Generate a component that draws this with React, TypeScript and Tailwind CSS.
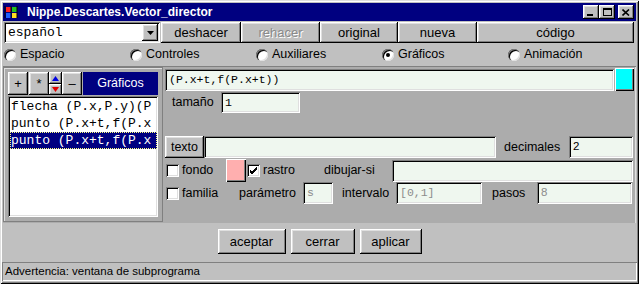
import React from 'react'

const RAISED = 'bg-[#c0c0c0] shadow-[inset_-1px_-1px_0_#000,inset_1px_1px_0_#fff,inset_-2px_-2px_0_#808080,inset_2px_2px_0_#dfdfdf]'
const SUNKEN = 'shadow-[inset_1px_1px_0_#808080,inset_-1px_-1px_0_#fff,inset_2px_2px_0_#000,inset_-2px_-2px_0_#dfdfdf]'
const FIELD = `bg-[#eff7ef] ${SUNKEN} flex items-center px-[4px]`
const MONO = "font-['Liberation_Mono','Courier_New',monospace]"

const Radio = ({ on }: { on?: boolean }) => (
  <span className="relative w-[12px] h-[12px] rounded-full bg-white shadow-[inset_1px_1px_0_#808080,inset_2px_2px_0_#000,inset_-1px_-1px_0_#dfdfdf] flex items-center justify-center shrink-0">
    {on && <span className="w-[4px] h-[4px] rounded-full bg-black" />}
  </span>
)

const Check = ({ on }: { on?: boolean }) => (
  <span className={`w-[13px] h-[13px] bg-white ${SUNKEN} flex items-center justify-center shrink-0`}>
    {on && (
      <svg width="9" height="9" viewBox="0 0 9 9">
        <path d="M1 4 L3 6 L8 1 M1 5 L3 7 L8 2 M1 6 L3 8 L8 3" stroke="#000" strokeWidth="1" fill="none" />
      </svg>
    )}
  </span>
)

const TitleBtn = ({ children }: { children: React.ReactNode }) => (
  <div className={`w-[16px] h-[14px] ${RAISED} flex items-center justify-center`}>{children}</div>
)

export default function App() {
  const radios = ['Espacio', 'Controles', 'Auxiliares', 'Gráficos', 'Animación']
  const items = ['flecha (P.x,P.y)(P', 'punto (P.x+t,f(P.x', 'punto (P.x+t,f(P.x']

  return (
    <div className="w-[639px] h-[284px] bg-[#c0c0c0] p-[3px] flex flex-col text-[12px] text-black font-['Liberation_Sans',Arial,sans-serif] shadow-[inset_1px_1px_0_#dfdfdf,inset_-1px_-1px_0_#000,inset_2px_2px_0_#fff,inset_-2px_-2px_0_#808080] overflow-hidden">
      {/* title bar */}
      <div className="h-[18px] bg-[#000080] flex items-center pl-[1px] pr-[2px] shrink-0">
        <svg width="16" height="14" viewBox="0 0 16 14" className="shrink-0">
          <rect x="0" y="0" width="16" height="14" fill="#000080" />
          <path d="M2 2 h5 v5 h-5z" fill="#ff2020" />
          <path d="M8 2 h5 v5 h-5z" fill="#20c020" />
          <path d="M2 8 h5 v5 h-5z" fill="#2060ff" />
          <path d="M8 8 h5 v5 h-5z" fill="#ffe020" />
          <path d="M1 1 v12 M7 1 v12 M13 1 v12" stroke="#000" strokeWidth="1" />
        </svg>
        <span className="ml-[7px] text-white font-bold text-[12px] leading-none">Nippe.Descartes.Vector_director</span>
        <div className="ml-auto flex items-center">
          <TitleBtn><span className="w-[6px] h-[2px] bg-black mt-[6px] mr-[2px]" /></TitleBtn>
          <TitleBtn><span className="w-[9px] h-[8px] border border-black border-t-2" /></TitleBtn>
          <div className="ml-[3px]">
            <TitleBtn>
              <svg width="8" height="7" viewBox="0 0 8 7"><path d="M0.5 0.5 L7 6.5 M7 0.5 L0.5 6.5" stroke="#000" strokeWidth="1.6" /></svg>
            </TitleBtn>
          </div>
        </div>
      </div>

      {/* toolbar */}
      <div className="mt-[1px] h-[21px] flex pl-[1px] shrink-0 text-[13px]">
        <div className={`w-[156px] mr-[1px] bg-white ${SUNKEN} flex items-center`}>
          <span className={`${MONO} text-[13px] pl-[4px] flex-1`}>español</span>
          <div className={`w-[16px] h-[17px] mr-[2px] ${RAISED} flex items-center justify-center`}>
            <svg width="7" height="4" viewBox="0 0 7 4"><path d="M0 0 h7 l-3.5 4z" fill="#000" /></svg>
          </div>
        </div>
        <div className={`w-[80px] ${RAISED} flex items-center justify-center`}>deshacer</div>
        <div className={`w-[79px] ${RAISED} flex items-center justify-center text-[#8a8a8a] [text-shadow:1px_1px_0_#fff]`}>rehacer</div>
        <div className={`w-[78px] ${RAISED} flex items-center justify-center`}>original</div>
        <div className={`w-[79px] ${RAISED} flex items-center justify-center`}>nueva</div>
        <div className={`w-[157px] ${RAISED} flex items-center justify-center`}>código</div>
      </div>

      {/* radios */}
      <div className="h-[23px] pl-[1px] grid grid-cols-[126px_126px_126px_126px_126px] items-center shrink-0 text-[12.5px]">
        {radios.map(r => (
          <div key={r} className="flex items-center gap-[4px]">
            <Radio on={r === 'Gráficos'} />
            <span>{r}</span>
          </div>
        ))}
      </div>

      {/* main panel */}
      <div className="h-[157px] bg-[#acacac] flex shrink-0 shadow-[inset_0_1px_0_#808080,inset_-1px_0_0_#dfdfdf]">
        <div className="mt-[1px] w-[160px] h-[155px] p-[5px] flex flex-col shadow-[inset_1px_1px_0_#808080,inset_-1px_-1px_0_#808080,inset_2px_2px_0_#dfdfdf]">
          <div className="h-[23px] flex text-[13px] shrink-0">
            <div className={`w-[20px] ${RAISED} flex items-center justify-center`}>+</div>
            <div className={`w-[20px] ml-[1px] ${RAISED} flex items-center justify-center`}>*</div>
            <div className="w-[13px] flex flex-col">
              <div className={`h-[12px] ${RAISED} flex items-center justify-center`}>
                <svg width="7" height="5" viewBox="0 0 7 5"><path d="M0 5 h7 l-3.5 -5z" fill="#0000e0" /></svg>
              </div>
              <div className={`h-[11px] ${RAISED} flex items-center justify-center`}>
                <svg width="7" height="5" viewBox="0 0 7 5"><path d="M0 0 h7 l-3.5 5z" fill="#e00000" /></svg>
              </div>
            </div>
            <div className={`w-[20px] ${RAISED} flex items-center justify-center`}>–</div>
            <div className="flex-1 ml-[1px] bg-[#000080] text-white flex items-center justify-center text-[12.5px]">Gráficos</div>
          </div>
          <div className={`mt-[1px] flex-1 bg-white ${SUNKEN} pt-[2px] pl-[2px] pr-[1px] ${MONO} text-[13px]`}>
            {items.map((t, i) => (
              <div
                key={i}
                className={`h-[17px] leading-[17px] pl-[1px] whitespace-nowrap overflow-hidden ${i === 2 ? 'bg-[#000080] text-white outline-1 outline-dotted outline-[#ffff80] -outline-offset-1' : ''}`}
              >
                {t}
              </div>
            ))}
          </div>
        </div>

        <div className="flex-1 pl-[2px] pt-[2px] flex flex-col">
          <div className="h-[23px] flex">
            <div className={`flex-1 h-[22px] mt-[1px] ${FIELD} ${MONO} text-[11.5px]`}>(P.x+t,f(P.x+t))</div>
            <div className="w-[19px] ml-[1px] mr-[2px] bg-[#00ffff] shadow-[inset_1px_1px_0_#fff,inset_-1px_-1px_0_#000,inset_-2px_-2px_0_#808080]" />
          </div>
          <div className="h-[22px] flex items-center pt-[1px]">
            <span className="ml-[7px] w-[49px] text-[12.5px]">tamaño</span>
            <div className={`w-[79px] h-[21px] ${FIELD} ${MONO} text-[11.5px]`}>1</div>
          </div>

          <div className="mt-[23px] h-[22px] flex items-center">
            <div className={`w-[39px] h-[22px] ${RAISED} flex items-center justify-center text-[12.5px]`}>texto</div>
            <div className={`w-[292px] h-[22px] ${FIELD}`} />
            <span className="ml-[8px] w-[65px] text-[12.5px]">decimales</span>
            <div className={`w-[64px] h-[22px] ${FIELD} text-[11.5px]`}>2</div>
          </div>

          <div className="mt-[1px] h-[23px] flex items-center text-[12.5px]">
            <span className="ml-[1px]"><Check /></span>
            <span className="ml-[3px] w-[44px]">fondo</span>
            <div className="w-[20px] h-[23px] bg-[#ffafaf] shadow-[inset_1px_1px_0_#fff,inset_-1px_-1px_0_#000,inset_-2px_-2px_0_#808080]" />
            <span className="ml-[1px]"><Check on /></span>
            <span className="ml-[3px] w-[61px]">rastro</span>
            <span className="w-[68px]">dibujar-si</span>
            <div className={`w-[241px] h-[22px] ${FIELD}`} />
          </div>

          <div className="h-[22px] flex items-center text-[12.5px]">
            <span className="ml-[1px]"><Check /></span>
            <span className="ml-[3px] w-[57px]">familia</span>
            <span className="w-[64px]">parámetro</span>
            <div className={`w-[30px] h-[22px] ${FIELD} ${MONO} text-[11.5px] text-[#8c8c8c]`}>s</div>
            <span className="ml-[9px] w-[54px]">intervalo</span>
            <div className={`w-[86px] h-[22px] ${FIELD} ${MONO} text-[11.5px] text-[#8c8c8c]`}>[0,1]</div>
            <span className="ml-[10px] w-[45px]">pasos</span>
            <div className={`w-[95px] h-[22px] ${FIELD} text-[11.5px] text-[#8c8c8c]`}>8</div>
          </div>
        </div>
      </div>

      {/* bottom buttons */}
      <div className="h-[39px] flex justify-center gap-[5px] pt-[6px] shrink-0 text-[13px]">
        <div className={`w-[68px] h-[25px] ${RAISED} flex items-center justify-center`}>aceptar</div>
        <div className={`w-[64px] h-[25px] ${RAISED} flex items-center justify-center`}>cerrar</div>
        <div className={`w-[62px] h-[25px] ${RAISED} flex items-center justify-center`}>aplicar</div>
      </div>

      {/* status bar */}
      <div className="h-[19px] -mx-[1px] flex items-center pl-[3px] text-[11.5px] shrink-0 shadow-[inset_1px_1px_0_#808080,inset_-1px_-1px_0_#fff]">
        Advertencia: ventana de subprograma
      </div>
    </div>
  )
}
